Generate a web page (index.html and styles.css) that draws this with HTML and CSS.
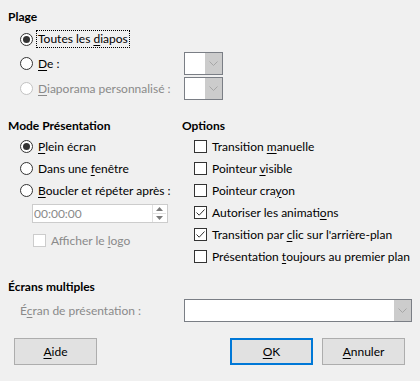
FILE: index.html
```html
<!DOCTYPE html>
<html lang="fr">
<head>
  <meta charset="UTF-8" />
  <title>Diaporama</title>
  <link rel="stylesheet" href="styles.css">
</head>
<body>

<div class="dialog">
  <section class="plage">
    <div class="heading">Plage</div>
    <div class="row r-first">
      <span class="radio on"></span>
      <span class="focus">Toutes les <u>d</u>iapos</span>
    </div>
    <div class="row r-pick">
      <span class="radio"></span>
      <span class="label-fixed"><u>D</u>e :</span>
      <span class="dropdown"><span class="drop-btn"><svg width="9" height="5" viewBox="0 0 9 5"><path d="M0.5 0.5 L4.5 4.5 L8.5 0.5" fill="none" stroke="#a6a6a6" stroke-width="1"/></svg></span></span>
    </div>
    <div class="row r-pick disabled">
      <span class="radio"></span>
      <span class="label-fixed"><u>D</u>iaporama personnalisé :</span>
      <span class="dropdown"><span class="drop-btn"><svg width="9" height="5" viewBox="0 0 9 5"><path d="M0.5 0.5 L4.5 4.5 L8.5 0.5" fill="none" stroke="#a6a6a6" stroke-width="1"/></svg></span></span>
    </div>
  </section>

  <div class="columns">
    <section class="mode">
      <div class="heading">Mode Présentation</div>
      <div class="row"><span class="radio on"></span><span><u>P</u>lein écran</span></div>
      <div class="row"><span class="radio"></span><span>Dans une <u>f</u>enêtre</span></div>
      <div class="row"><span class="radio"></span><span><u>B</u>oucler et répéter après :</span></div>
      <div class="spin">
        <span class="spin-text">00:00:00</span>
        <span class="spin-btns">
          <span class="spin-up"><svg width="7" height="4" viewBox="0 0 7 4"><path d="M3.5 0 L7 4 L0 4 Z" fill="#7a7a7a"/></svg></span>
          <span class="spin-down"><svg width="7" height="4" viewBox="0 0 7 4"><path d="M0 0 L7 0 L3.5 4 Z" fill="#7a7a7a"/></svg></span>
        </span>
      </div>
      <div class="row sub disabled"><span class="check"></span><span>Afficher le <u>l</u>ogo</span></div>
    </section>

    <section class="options">
      <div class="heading">Options</div>
      <div class="row"><span class="check"></span><span>Transition <u>m</u>anuelle</span></div>
      <div class="row"><span class="check"></span><span>Pointeur <u>v</u>isible</span></div>
      <div class="row"><span class="check"></span><span>Pointeur cra<u>y</u>on</span></div>
      <div class="row"><span class="check on"><svg width="11" height="11" viewBox="0 0 11 11"><path d="M1.5 5.5 L4.2 8.2 L9.5 2.5" fill="none" stroke="#333" stroke-width="1"/></svg></span><span>Autoriser les animati<u>o</u>ns</span></div>
      <div class="row"><span class="check on"><svg width="11" height="11" viewBox="0 0 11 11"><path d="M1.5 5.5 L4.2 8.2 L9.5 2.5" fill="none" stroke="#333" stroke-width="1"/></svg></span><span>Transition par <u>c</u>lic sur l'arrière-plan</span></div>
      <div class="row"><span class="check"></span><span>Présentation <u>t</u>oujours au premier plan</span></div>
    </section>
  </div>

  <section class="screens">
    <div class="heading">Écrans multiples</div>
    <div class="screen-row">
      <span class="screen-label disabled">É<u>c</u>ran de présentation :</span>
      <span class="combo"><span class="drop-btn"><svg width="9" height="5" viewBox="0 0 9 5"><path d="M0.5 0.5 L4.5 4.5 L8.5 0.5" fill="none" stroke="#a6a6a6" stroke-width="1"/></svg></span></span>
    </div>
  </section>

  <div class="buttons">
    <div class="button"><u>A</u>ide</div>
    <div class="spacer"></div>
    <div class="button default"><u>O</u>K</div>
    <div class="button"><u>A</u>nnuler</div>
  </div>
</div>

</body>
</html>
```

FILE: styles.css
```css
* {
  box-sizing: border-box;
}
body {
  margin: 0;
  background: #f0f0f0;
  font-family: Lato, 'Noto Sans', sans-serif;
  font-size: 12px;
  color: #000;
}

.dialog {
  width: 420px;
  height: 381px;
  padding: 8px 8px 0 8px;
}

u {
  text-decoration: underline;
  text-underline-offset: 2px;
}

.heading {
  height: 18px;
  line-height: 18px;
  font-weight: bold;
}

.row {
  display: flex;
  align-items: center;
  height: 22px;
  padding-left: 12px;
  gap: 5px;
  white-space: nowrap;
}

.disabled {
  color: #8a8a8a;
}

/* radio buttons */
.radio {
  width: 13px;
  height: 13px;
  border: 1px solid #333;
  border-radius: 50%;
  background: #fff;
  display: flex;
  align-items: center;
  justify-content: center;
  flex: none;
}
.radio.on::after {
  content: '';
  width: 7px;
  height: 7px;
  border-radius: 50%;
  background: #333;
}
.disabled .radio {
  border-color: #c2c2c2;
}

/* check boxes */
.check {
  width: 13px;
  height: 13px;
  border: 1px solid #333;
  background: #fff;
  display: flex;
  align-items: center;
  justify-content: center;
  flex: none;
}
.disabled .check {
  border-color: #cccccc;
}

/* Plage */
.plage .r-first {
  height: 24px;
  margin-top: 1px;
}
.focus {
  outline: 1px dotted #000;
  outline-offset: 0;
  padding: 0 1px;
  line-height: 16px;
  margin-left: -1px;
}
.plage .r-pick {
  height: 24px;
}
.plage .r-pick + .r-pick {
  margin-top: 1px;
}
.label-fixed {
  width: 141px;
}

.dropdown {
  width: 39px;
  height: 23px;
  border: 1px solid #7a7e85;
  background: #fff;
  display: flex;
  justify-content: flex-end;
}
.drop-btn {
  width: 17px;
  height: 100%;
  background: #cccccc;
  display: flex;
  align-items: center;
  justify-content: center;
}

/* two columns */
.columns {
  display: grid;
  grid-template-columns: 174px 1fr;
  margin-top: 17px;
}
.mode .row:first-of-type,
.options .row:first-of-type {
  margin-top: 1px;
}

.spin {
  margin: 3px 0 0 24px;
  width: 136px;
  height: 19px;
  border: 1px solid #cccccc;
  background: #fff;
  display: flex;
  align-items: center;
  justify-content: space-between;
  padding-left: 1px;
}
.spin-text {
  color: #8a8a8a;
}
.spin-btns {
  display: flex;
  flex-direction: column;
  width: 14px;
  height: 17px;
  margin-right: 1px;
  border-left: 1px solid #e0e0e0;
}
.spin-up,
.spin-down {
  flex: 1;
  display: flex;
  align-items: center;
  justify-content: center;
}
.spin-up {
  border-bottom: 1px solid #e0e0e0;
}
.row.sub {
  padding-left: 25px;
  margin-top: 6px;
}

/* Écrans multiples */
.screens {
  margin-top: 11px;
}
.screen-row {
  display: flex;
  align-items: center;
  margin-top: 3px;
}
.screen-label {
  width: 176px;
  padding-left: 12px;
}
.combo {
  width: 228px;
  height: 23px;
  border: 1px solid #7a7e85;
  background: #fff;
  display: flex;
  justify-content: flex-end;
}

/* bottom buttons */
.buttons {
  display: flex;
  gap: 9px;
  margin-top: 16px;
  padding: 0 7px 0 6px;
}
.spacer {
  flex: 1;
}
.button {
  width: 83px;
  height: 27px;
  line-height: 25px;
  text-align: center;
  background: #e1e1e1;
  border: 1px solid #adadad;
}
.button.default {
  border: 2px solid #0078d7;
  line-height: 23px;
}
```
